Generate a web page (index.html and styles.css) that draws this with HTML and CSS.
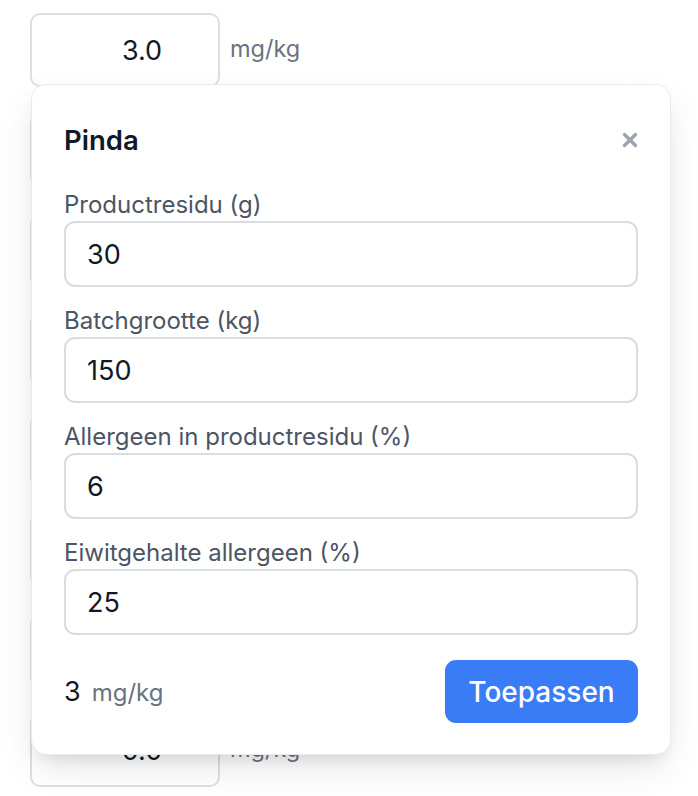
FILE: index.html
```html
<!DOCTYPE html>
<html lang="nl">
<head>
<meta charset="utf-8">
<title>Pinda</title>
<link rel="stylesheet" href="styles.css">
</head>
<body>
<div class="page">
  <div class="list">
    <div class="row"><div class="box">3.0</div><span class="unit">mg/kg</span></div>
    <div class="row"><div class="box"></div></div>
    <div class="row"><div class="box"></div></div>
    <div class="row"><div class="box"></div></div>
    <div class="row"><div class="box"></div></div>
    <div class="row"><div class="box"></div></div>
    <div class="row"><div class="box"></div></div>
    <div class="row"><div class="box">0.0</div><span class="unit">mg/kg</span></div>
  </div>

  <div class="popover">
    <div class="pop-header">
      <h2 class="pop-title">Pinda</h2>
      <button class="close" aria-label="Sluiten">
        <svg width="16" height="16" viewBox="0 0 16 16"><path d="M2.5 2.5 L13.5 13.5 M13.5 2.5 L2.5 13.5" stroke="#9ca3af" stroke-width="3.4" stroke-linecap="round" fill="none"/></svg>
      </button>
    </div>
    <div class="fields">
      <label class="field">
        <span class="label">Productresidu (g)</span>
        <input class="input" type="text" value="30">
      </label>
      <label class="field">
        <span class="label">Batchgrootte (kg)</span>
        <input class="input" type="text" value="150">
      </label>
      <label class="field">
        <span class="label">Allergeen in productresidu (%)</span>
        <input class="input" type="text" value="6">
      </label>
      <label class="field">
        <span class="label">Eiwitgehalte allergeen (%)</span>
        <input class="input" type="text" value="25">
      </label>
    </div>
    <div class="pop-footer">
      <div class="result"><span class="result-value">3</span><span class="result-unit">mg/kg</span></div>
      <button class="apply">Toepassen</button>
    </div>
  </div>
</div>
</body>
</html>
```

FILE: styles.css
```css
* { box-sizing: border-box; }

html, body {
  margin: 0;
  padding: 0;
  background: #ffffff;
  font-family: Inter, "Noto Sans", "Liberation Sans", sans-serif;
  color: #111827;
}

.page {
  position: relative;
  width: 698px;
  height: 796px;
  overflow: hidden;
  padding: 13px 0 0 30px;
}

.list {
  display: flex;
  flex-direction: column;
  gap: 26px;
}

.row {
  display: flex;
  align-items: center;
  gap: 10px;
}

.box {
  width: 190px;
  height: 74px;
  border: 2px solid #dcdfe4;
  border-radius: 10px;
  display: flex;
  align-items: center;
  justify-content: center;
  padding-left: 34px;
  font-size: 27px;
  color: #111827;
  background: #fff;
}

.unit {
  font-size: 23.5px;
  color: #6b7280;
  margin-top: -4px;
}

.popover {
  position: absolute;
  left: 31px;
  top: 84px;
  width: 640px;
  background: #ffffff;
  border: 1px solid #e8eaed;
  border-radius: 15px;
  padding: 31px 32px 31px 32px;
  box-shadow: 0 15px 38px -6px rgba(0, 0, 0, 0.12), 0 10px 16px -8px rgba(0, 0, 0, 0.10);
}

.pop-header {
  display: flex;
  align-items: center;
  justify-content: space-between;
  height: 48px;
}

.pop-title {
  margin: 0;
  font-size: 27.5px;
  font-weight: 600;
  color: #111827;
  line-height: 48px;
}

.close {
  border: 0;
  background: none;
  padding: 0;
  width: 16px;
  height: 16px;
  display: flex;
  cursor: pointer;
}

.fields {
  display: flex;
  flex-direction: column;
  gap: 19px;
  margin-top: 26px;
}

.field {
  display: flex;
  flex-direction: column;
  gap: 1px;
}

.label {
  font-size: 24px;
  line-height: 30px;
  color: #4b5563;
}

.input {
  width: 100%;
  height: 66px;
  border: 2px solid #d9dce1;
  border-radius: 11px;
  padding: 0 21px;
  font-family: inherit;
  font-size: 27px;
  color: #111827;
  background: #fff;
  outline: none;
}

.pop-footer {
  display: flex;
  align-items: center;
  justify-content: space-between;
  margin-top: 25px;
}

.result {
  display: flex;
  align-items: baseline;
  gap: 11px;
}

.result-value {
  font-size: 27px;
  color: #111827;
}

.result-unit {
  font-size: 24px;
  color: #6b7280;
}

.apply {
  width: 193px;
  height: 63px;
  border: 0;
  border-radius: 11px;
  background: #3a7cf6;
  color: #ffffff;
  font-family: inherit;
  font-size: 28px;
  font-weight: 500;
  cursor: pointer;
}
```
